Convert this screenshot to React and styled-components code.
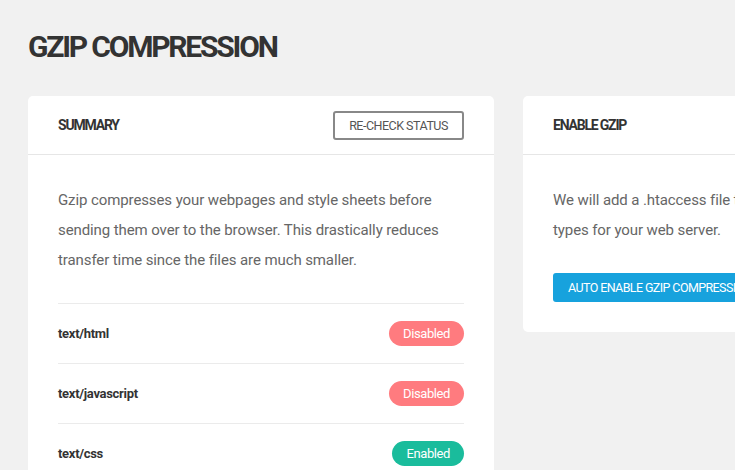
import React from "react";
import styled, { createGlobalStyle } from "styled-components";

const Global = createGlobalStyle`
  html, body { margin: 0; padding: 0; background: #f1f1f1; }
  body { font-family: Roboto, "Liberation Sans", sans-serif; overflow: hidden; }
  * { box-sizing: border-box; }
`;

const Page = styled.div`
  padding: 30px 0 0 28px;
  width: 1100px;
`;

const Title = styled.h1`
  margin: 0 0 32px;
  font-size: 30px;
  line-height: 34px;
  font-weight: 700;
  color: #333;
  letter-spacing: -2.2px;
`;

const Columns = styled.div`
  display: flex;
  align-items: flex-start;
  gap: 29px;
`;

const Card = styled.section`
  width: 466px;
  background: #fff;
  border-radius: 5px;
`;

const CardHeader = styled.header`
  height: 59px;
  padding: 0 30px;
  display: flex;
  align-items: center;
  justify-content: space-between;
  border-bottom: 1px solid #e6e6e6;
`;

const CardTitle = styled.h2`
  margin: 0;
  font-size: 14px;
  font-weight: 700;
  color: #333;
  letter-spacing: -1.2px;
`;

const OutlineButton = styled.button`
  height: 29px;
  width: 131px;
  padding: 0;
  border: 2px solid #888;
  border-radius: 3px;
  background: #fff;
  color: #555;
  font-family: inherit;
  font-size: 12.5px;
  letter-spacing: -0.5px;
`;

const CardBody = styled.div`
  padding: 30px 30px ${(p) => p.$bottom || 0}px;
`;

const Text = styled.p`
  margin: 0;
  font-size: 15px;
  line-height: 30px;
  color: #666;
  letter-spacing: -0.1px;
  white-space: ${(p) => (p.$nowrap ? "nowrap" : "normal")};
`;

const Rows = styled.div`
  margin-top: 28px;
`;

const Row = styled.div`
  height: 60px;
  display: flex;
  align-items: center;
  justify-content: space-between;
  border-top: 1px solid #ebebeb;
`;

const Label = styled.span`
  font-size: 13px;
  font-weight: 700;
  color: #333;
  letter-spacing: -0.3px;
`;

const Pill = styled.span`
  height: 25px;
  padding: 0 ${(p) => (p.$on ? 14 : 14)}px;
  border-radius: 13px;
  display: inline-flex;
  align-items: center;
  background: ${(p) => (p.$on ? "#1abc9c" : "#ff7b7f")};
  color: #fff;
  font-size: 13px;
  letter-spacing: -0.4px;
`;

const PrimaryButton = styled.button`
  margin-top: 28px;
  height: 29px;
  padding: 0 15px;
  border: 0;
  border-radius: 3px;
  background: #17a2dd;
  color: #fff;
  font-family: inherit;
  font-size: 12.5px;
  letter-spacing: -0.6px;
  white-space: nowrap;
`;

const types = [
  { name: "text/html", on: false },
  { name: "text/javascript", on: false },
  { name: "text/css", on: true },
];

export default function App() {
  return (
    <>
      <Global />
      <Page>
        <Title>GZIP COMPRESSION</Title>
        <Columns>
          <Card>
            <CardHeader>
              <CardTitle>SUMMARY</CardTitle>
              <OutlineButton>RE-CHECK STATUS</OutlineButton>
            </CardHeader>
            <CardBody>
              <Text>
                Gzip compresses your webpages and style sheets before sending
                them over to the browser. This drastically reduces transfer time
                since the files are much smaller.
              </Text>
              <Rows>
                {types.map((t) => (
                  <Row key={t.name}>
                    <Label>{t.name}</Label>
                    <Pill $on={t.on}>{t.on ? "Enabled" : "Disabled"}</Pill>
                  </Row>
                ))}
              </Rows>
            </CardBody>
          </Card>
          <Card>
            <CardHeader>
              <CardTitle>ENABLE GZIP</CardTitle>
            </CardHeader>
            <CardBody $bottom={30}>
              <Text $nowrap>
                We will add a .htaccess file that enables gzip for these mime
                <br />
                types for your web server.
              </Text>
              <PrimaryButton>AUTO ENABLE GZIP COMPRESSION</PrimaryButton>
            </CardBody>
          </Card>
        </Columns>
      </Page>
    </>
  );
}
